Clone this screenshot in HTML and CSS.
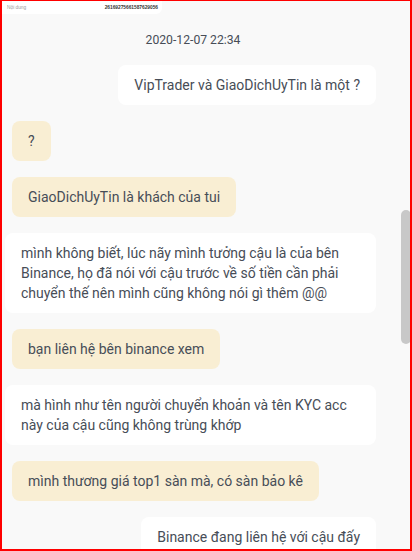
FILE: index.html
```html
<!DOCTYPE html>
<html lang="vi">
<head>
<meta charset="utf-8">
<link rel="stylesheet" href="styles.css">
</head>
<body>
<div class="frame">
  <div class="topbar">
    <span class="tb-label">Nội dung</span>
    <span class="tb-id">26169275661587629056</span>
  </div>
  <div class="chat">
    <div class="time">2020-12-07 22:34</div>
    <div class="msg white">VipTrader và GiaoDichUyTin là một ?</div>
    <div class="msg yellow">?</div>
    <div class="msg yellow">GiaoDichUyTin là khách của tui</div>
    <div class="msg white">mình không biết, lúc nãy mình tưởng cậu là của bên Binance, họ đã nói với cậu trước về số tiền cần phải chuyển thế nên mình cũng không nói gì thêm @@</div>
    <div class="msg yellow">bạn liên hệ bên binance xem</div>
    <div class="msg white">mà hình như tên người chuyển khoản và tên KYC acc này của cậu cũng không trùng khớp</div>
    <div class="msg yellow">mình thương giá top1 sàn mà, có sàn bảo kê</div>
    <div class="msg white">Binance đang liên hệ với cậu đấy</div>
  </div>
  <div class="scrollbar"></div>
</div>
</body>
</html>
```
FILE: styles.css
```css
html, body {
  margin: 0;
  padding: 0;
  background: #f9f9f9;
}
.frame {
  position: relative;
  width: 412px;
  height: 551px;
  box-sizing: border-box;
  border: 2px solid #ff0000;
  border-top-width: 1px;
  overflow: hidden;
  background: #f9f9f9;
  font-family: Roboto, "Noto Sans", sans-serif;
}
.topbar {
  width: 160px;
  height: 13px;
  background: #ffffff;
  border-bottom-right-radius: 6px;
  display: flex;
  align-items: center;
  justify-content: space-between;
  padding: 0 4px 0 5px;
  box-sizing: border-box;
  font-family: "Liberation Sans", sans-serif;
  font-size: 4.8px;
}
.tb-label {
  color: #9a9a9a;
}
.tb-id {
  color: #333;
  font-weight: bold;
}
.chat {
  display: flex;
  flex-direction: column;
  align-items: flex-start;
  gap: 16px;
  width: 371px;
  padding-left: 3px;
}
.time {
  align-self: center;
  margin-top: 16px;
  margin-left: 5px;
  font-size: 12.2px;
  line-height: 20px;
  color: #474d57;
  margin-bottom: -1px;
}
.msg {
  font-size: 14px;
  line-height: 20px;
  color: #474d57;
  padding: 10px 16px;
  border-radius: 8px;
  box-sizing: border-box;
  max-width: 371px;
}
.white {
  background: #ffffff;
  align-self: flex-end;
}
.yellow {
  background: #f9eed3;
  margin-left: 7px;
}
.scrollbar {
  position: absolute;
  right: -1px;
  top: 209px;
  width: 10px;
  height: 134px;
  border-radius: 5px;
  background: #c8c8c8;
}
```
